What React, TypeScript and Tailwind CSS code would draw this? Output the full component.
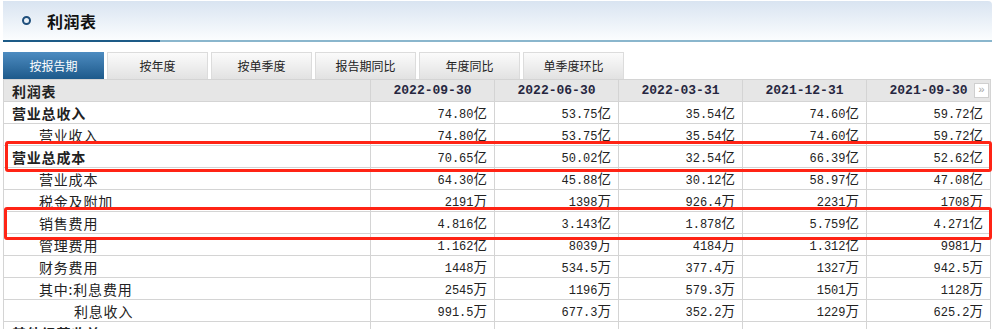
import React from 'react';

// row data for the income statement
type Row = { label: string; level: 0 | 1 | 2; values: string[] };

const dates = ['2022-09-30', '2022-06-30', '2022-03-31', '2021-12-31', '2021-09-30'];

const rows: Row[] = [
  { label: '营业总收入', level: 0, values: ['74.80亿', '53.75亿', '35.54亿', '74.60亿', '59.72亿'] },
  { label: '营业收入', level: 1, values: ['74.80亿', '53.75亿', '35.54亿', '74.60亿', '59.72亿'] },
  { label: '营业总成本', level: 0, values: ['70.65亿', '50.02亿', '32.54亿', '66.39亿', '52.62亿'] },
  { label: '营业成本', level: 1, values: ['64.30亿', '45.88亿', '30.12亿', '58.97亿', '47.08亿'] },
  { label: '税金及附加', level: 1, values: ['2191万', '1398万', '926.4万', '2231万', '1708万'] },
  { label: '销售费用', level: 1, values: ['4.816亿', '3.143亿', '1.878亿', '5.759亿', '4.271亿'] },
  { label: '管理费用', level: 1, values: ['1.162亿', '8039万', '4184万', '1.312亿', '9981万'] },
  { label: '财务费用', level: 1, values: ['1448万', '534.5万', '377.4万', '1327万', '942.5万'] },
  { label: '其中:利息费用', level: 1, values: ['2545万', '1196万', '579.3万', '1501万', '1128万'] },
  { label: '利息收入', level: 2, values: ['991.5万', '677.3万', '352.2万', '1229万', '625.2万'] },
  { label: '其他经营收益', level: 0, values: ['', '', '', '', ''] },
];

const tabs = ['按报告期', '按年度', '按单季度', '报告期同比', '年度同比', '单季度环比'];

const cjk = "font-['Noto_Sans_CJK_SC',sans-serif]";

// split "74.80亿" into digits + unit so digits can be monospace
function Amount({ v }: { v: string }) {
  const num = v.replace(/[亿万]$/, '');
  const unit = v.slice(num.length);
  return (
    <span className="whitespace-nowrap">
      <span className="font-['Liberation_Mono',monospace] text-[12px]">{num}</span>
      <span className={`${cjk} text-[13.5px]`}>{unit}</span>
    </span>
  );
}

export default function App() {
  const indent = ['pl-[8px]', 'pl-[35px]', 'pl-[70px]'];
  return (
    <div className={`relative w-[992px] h-[329px] overflow-hidden bg-white ${cjk}`}>
      {/* title bar */}
      <div className="ml-[3px] mt-[1px] h-[39px] rounded-tr-[4px] bg-gradient-to-b from-[#d9e4f1] to-[#fbfdfe] flex items-center pl-[19px]">
        <span className="w-[9px] h-[9px] rounded-full border-2 border-[#1f4f7c]"></span>
        <span className="ml-[16px] text-[16px] font-bold text-[#111] leading-none tracking-[0.5px]">利润表</span>
      </div>
      <div className="ml-[3px] flex h-[2px]">
        <div className="w-[157px] bg-[#1d5b87]"></div>
        <div className="flex-1 bg-[#8ab6cd]"></div>
      </div>

      {/* tabs */}
      <div className="ml-[3px] mt-[10px] flex gap-[3px]">
        {tabs.map((t, i) => (
          <div
            key={t}
            className={
              i === 0
                ? 'w-[101px] h-[27px] flex items-center justify-center text-[12px] text-white bg-gradient-to-b from-[#4d8cc1] to-[#1d5a8b]'
                : 'w-[101px] h-[27px] flex items-center justify-center text-[12px] text-[#222] border border-b-0 border-[#dcdcdc] bg-gradient-to-b from-[#fbfbfb] to-[#e2e2e2]'
            }
          >
            {t}
          </div>
        ))}
      </div>

      {/* table */}
      <table className="ml-[3px] w-[987px] table-fixed border-collapse text-[14px] text-[#222]">
        <colgroup>
          <col className="w-[367px]" />
          {dates.map((d) => (
            <col key={d} className="w-[124px]" />
          ))}
        </colgroup>
        <thead>
          <tr className="h-[22px] bg-[#e6e6e6]">
            <th className="border border-[#d4d4d4] text-left pl-[8px] font-bold leading-none tracking-[0.8px]">利润表</th>
            {dates.map((d, i) => (
              <th key={d} className="relative border border-[#d4d4d4] font-['Liberation_Mono',monospace] text-[13px] font-bold text-[#262640] leading-none">
                {d}
                {i === dates.length - 1 && (
                  <span className="absolute right-[1px] top-[3px] w-[15px] h-[15px] border border-[#cfcfcf] bg-white flex items-center justify-center text-[11px] text-[#aaa] font-normal">
                    »
                  </span>
                )}
              </th>
            ))}
          </tr>
        </thead>
        <tbody>
          {rows.map((r) => (
            <tr key={r.label} className="h-[22px]">
              <td className={`border border-[#d4d4d4] leading-none tracking-[0.8px] ${indent[r.level]} ${r.level === 0 ? 'font-bold' : ''}`}>
                {r.label}
              </td>
              {r.values.map((v, j) => (
                <td key={j} className="border border-[#d4d4d4] text-right pr-[7px] leading-none">
                  {v && <Amount v={v} />}
                </td>
              ))}
            </tr>
          ))}
        </tbody>
      </table>

      {/* red highlight boxes drawn over the table */}
      <div className="absolute left-[5px] top-[141px] w-[987px] h-[31px] border-[3px] border-[#ff2415] rounded-[3px]"></div>
      <div className="absolute left-[4px] top-[207px] w-[988px] h-[33px] border-[3px] border-[#ff2415] rounded-[3px]"></div>
    </div>
  );
}
